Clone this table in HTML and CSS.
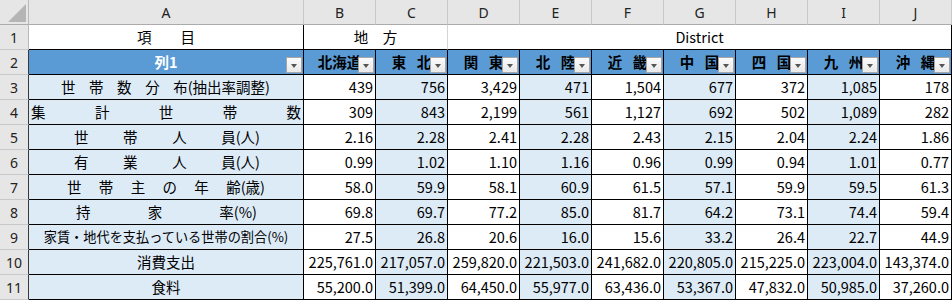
FILE: index.html
```html
<!DOCTYPE html>
<html lang="ja">
<head>
<meta charset="utf-8">
<title>Sheet</title>
<link rel="stylesheet" href="styles.css">
</head>
<body>
<div class="sheet">
  <div class="corner"><svg width="28" height="24" viewBox="0 0 28 24"><polygon points="26,4 26,22 8,22" fill="#b5b5b5"/></svg></div>
  <div class="ch">A</div><div class="ch">B</div><div class="ch">C</div><div class="ch">D</div><div class="ch">E</div><div class="ch">F</div><div class="ch">G</div><div class="ch">H</div><div class="ch">I</div><div class="ch">J</div>

  <div class="rh rh1">1</div>
  <div class="c r1 bk">項　　目</div>
  <div class="c r1 span2">地　方</div>
  <div class="c r1 span7 bk">District</div>

  <div class="rh">2</div>
  <div class="c th first">列1<span class="dd"></span></div>
  <div class="c th">北海道<span class="dd"></span></div>
  <div class="c th">東 北<span class="dd"></span></div>
  <div class="c th">関 東<span class="dd"></span></div>
  <div class="c th">北 陸<span class="dd"></span></div>
  <div class="c th">近 畿<span class="dd"></span></div>
  <div class="c th">中 国<span class="dd"></span></div>
  <div class="c th">四 国<span class="dd"></span></div>
  <div class="c th">九 州<span class="dd"></span></div>
  <div class="c th">沖 縄<span class="dd"></span></div>

  <div class="rh">3</div>
  <div class="c lab dist p3"><span>世</span><span>帯</span><span>数</span><span>分</span><span>布(抽出率調整)</span></div>
  <div class="c n">439</div><div class="c n alt">756</div><div class="c n">3,429</div><div class="c n alt">471</div><div class="c n">1,504</div><div class="c n alt">677</div><div class="c n">372</div><div class="c n alt">1,085</div><div class="c n">178</div>

  <div class="rh">4</div>
  <div class="c lab dist p4"><span>集</span><span>計</span><span>世</span><span>帯</span><span>数</span></div>
  <div class="c n">309</div><div class="c n alt">843</div><div class="c n">2,199</div><div class="c n alt">561</div><div class="c n">1,127</div><div class="c n alt">692</div><div class="c n">502</div><div class="c n alt">1,089</div><div class="c n">282</div>

  <div class="rh">5</div>
  <div class="c lab dist p5"><span>世</span><span>帯</span><span>人</span><span>員(人)</span></div>
  <div class="c n">2.16</div><div class="c n alt">2.28</div><div class="c n">2.41</div><div class="c n alt">2.28</div><div class="c n">2.43</div><div class="c n alt">2.15</div><div class="c n">2.04</div><div class="c n alt">2.24</div><div class="c n">1.86</div>

  <div class="rh">6</div>
  <div class="c lab dist p5"><span>有</span><span>業</span><span>人</span><span>員(人)</span></div>
  <div class="c n">0.99</div><div class="c n alt">1.02</div><div class="c n">1.10</div><div class="c n alt">1.16</div><div class="c n">0.96</div><div class="c n alt">0.99</div><div class="c n">0.94</div><div class="c n alt">1.01</div><div class="c n">0.77</div>

  <div class="rh">7</div>
  <div class="c lab dist p7"><span>世</span><span>帯</span><span>主</span><span>の</span><span>年</span><span>齢(歳)</span></div>
  <div class="c n">58.0</div><div class="c n alt">59.9</div><div class="c n">58.1</div><div class="c n alt">60.9</div><div class="c n">61.5</div><div class="c n alt">57.1</div><div class="c n">59.9</div><div class="c n alt">59.5</div><div class="c n">61.3</div>

  <div class="rh">8</div>
  <div class="c lab dist p8"><span>持</span><span>家</span><span>率(%)</span></div>
  <div class="c n">69.8</div><div class="c n alt">69.7</div><div class="c n">77.2</div><div class="c n alt">85.0</div><div class="c n">81.7</div><div class="c n alt">64.2</div><div class="c n">73.1</div><div class="c n alt">74.4</div><div class="c n">59.4</div>

  <div class="rh">9</div>
  <div class="c lab center prop">家賃・地代を支払っている世帯の割合(%)</div>
  <div class="c n">27.5</div><div class="c n alt">26.8</div><div class="c n">20.6</div><div class="c n alt">16.0</div><div class="c n">15.6</div><div class="c n alt">33.2</div><div class="c n">26.4</div><div class="c n alt">22.7</div><div class="c n">44.9</div>

  <div class="rh">10</div>
  <div class="c lab center">消費支出</div>
  <div class="c n">225,761.0</div><div class="c n alt">217,057.0</div><div class="c n">259,820.0</div><div class="c n alt">221,503.0</div><div class="c n">241,682.0</div><div class="c n alt">220,805.0</div><div class="c n">215,225.0</div><div class="c n alt">223,004.0</div><div class="c n">143,374.0</div>

  <div class="rh">11</div>
  <div class="c lab center">食料</div>
  <div class="c n">55,200.0</div><div class="c n alt">51,399.0</div><div class="c n">64,450.0</div><div class="c n alt">55,977.0</div><div class="c n">63,436.0</div><div class="c n alt">53,367.0</div><div class="c n">47,832.0</div><div class="c n alt">50,985.0</div><div class="c n">37,260.0</div>
</div>
</body>
</html>
```

FILE: styles.css
```css
* { box-sizing: border-box; }
html, body { margin: 0; padding: 0; background: #fff; }
body {
  font-family: "Noto Sans CJK JP", "Noto Sans", sans-serif;
  font-size: 14.5px;
  color: #000;
}
.sheet {
  display: grid;
  grid-template-columns: 29px 275px repeat(9, 72px);
  grid-auto-rows: 25px;
  width: 952px;
}
.corner, .ch, .rh {
  background: #e6e6e6;
  color: #222;
  font-family: "Noto Sans", sans-serif;
  font-size: 14px;
  display: flex;
  align-items: center;
  justify-content: center;
}
.corner {
  border-right: 1px solid #b9b9b9;
  border-bottom: 1px solid #ababab;
}
.corner svg { display: block; }
.ch {
  border-right: 1px solid #c9c9c9;
  border-bottom: 1px solid #ababab;
}
.rh {
  border-right: 1px solid #3a3a3a;
  border-bottom: 1px solid #c9c9c9;
}
.rh1 { border-right-color: #b9b9b9; }
.c {
  position: relative;
  border-right: 1px solid #000;
  border-bottom: 1px solid #000;
  line-height: 24px;
  white-space: nowrap;
  overflow: hidden;
}
.r1 { text-align: center; background: #fff; }
.span2 { grid-column: span 2; border-right-color: #d4d4d4; }
.span7 { grid-column: span 7; }
.th {
  background: #5b9bd5;
  font-weight: bold;
  text-align: center;
  word-spacing: 7px;
}
.th.first { color: #fff; }
.dd {
  position: absolute;
  right: 1px;
  bottom: 1px;
  width: 16px;
  height: 16px;
  border: 1px solid #a6a6a6;
  background: linear-gradient(#fbfbfb, #e9e9e9);
}
.dd::after {
  content: "";
  position: absolute;
  left: 4px;
  top: 6px;
  border-left: 3.5px solid transparent;
  border-right: 3.5px solid transparent;
  border-top: 4px solid #555;
}
.lab { background: #ddebf7; }
.center { text-align: center; }
.prop { font-size: 13.2px; }
.dist {
  display: flex;
  justify-content: space-between;
  align-items: center;
}
.p3 { padding: 0 33px 0 32px; }
.p4 { padding: 0 2px 0 2px; }
.p5 { padding: 0 43px 0 45px; }
.p7 { padding: 0 38px 0 38px; }
.p8 { padding: 0 46px 0 47px; }
.n { text-align: right; padding-right: 2px; background: #fff; }
.n.alt { background: #ddebf7; }
```
